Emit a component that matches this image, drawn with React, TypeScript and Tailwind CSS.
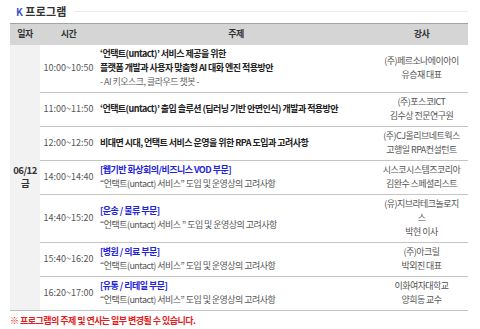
import React from 'react';

type Session = {
  time: string;
  title: React.ReactNode;
  speaker: React.ReactNode;
};

const sessions: Session[] = [
  {
    time: '10:00~10:50',
    title: (
      <>
        <p className="font-bold text-[#222]">‘언택트(untact)’ 서비스 제공을 위한</p>
        <p className="font-bold text-[#222]">플랫폼 개발과 사용자 맞춤형 AI 대화 엔진 적용방안</p>
        <p className="text-[#666]">- AI 키오스크, 클라우드 챗봇 -</p>
      </>
    ),
    speaker: (
      <>
        <p>(주)페르소나에이아이</p>
        <p>유승재 대표</p>
      </>
    ),
  },
  {
    time: '11:00~11:50',
    title: (
      <p className="font-bold text-[#222]">
        ‘언택트(untact)’ 출입 솔루션 (딥러닝 기반 안면인식) 개발과 적용방안
      </p>
    ),
    speaker: (
      <>
        <p>(주)포스코ICT</p>
        <p>김수상 전문연구원</p>
      </>
    ),
  },
  {
    time: '12:00~12:50',
    title: (
      <p className="font-bold text-[#222]">
        비대면 시대, 언택트 서비스 운영을 위한 RPA 도입과 고려사항
      </p>
    ),
    speaker: (
      <>
        <p>(주)CJ올리브네트웍스</p>
        <p>고행일 RPA컨설턴트</p>
      </>
    ),
  },
  {
    time: '14:00~14:40',
    title: (
      <>
        <p className="font-bold text-[#2323d6]">[웹기반 화상회의/비즈니스 VOD 부문]</p>
        <p className="text-[#555]">“언택트(untact) 서비스” 도입 및 운영상의 고려사항</p>
      </>
    ),
    speaker: (
      <>
        <p>시스코시스템즈코리아</p>
        <p>김완수 스페셜리스트</p>
      </>
    ),
  },
  {
    time: '14:40~15:20',
    title: (
      <>
        <p className="font-bold text-[#2323d6]">[운송 / 물류 부문]</p>
        <p className="text-[#555]">“언택트(untact) 서비스 ” 도입 및 운영상의 고려사항</p>
      </>
    ),
    speaker: (
      <>
        <p>(유)지브라테크놀로지</p>
        <p>스</p>
        <p>박현 이사</p>
      </>
    ),
  },
  {
    time: '15:40~16:20',
    title: (
      <>
        <p className="font-bold text-[#2323d6]">[병원 / 의료 부문]</p>
        <p className="text-[#555]">“언택트(untact) 서비스” 도입 및 운영상의 고려사항</p>
      </>
    ),
    speaker: (
      <>
        <p>(주)아크릴</p>
        <p>박외진 대표</p>
      </>
    ),
  },
  {
    time: '16:20~17:00',
    title: (
      <>
        <p className="font-bold text-[#2323d6]">[유통 / 리테일 부문]</p>
        <p className="text-[#555]">“언택트(untact) 서비스” 도입 및 운영상의 고려사항</p>
      </>
    ),
    speaker: (
      <>
        <p>이화여자대학교</p>
        <p>양희동 교수</p>
      </>
    ),
  },
];

export default function App() {
  return (
    <div
      className="w-[480px] h-[329px] bg-white px-[10px] pt-[3px] overflow-hidden text-[9px] leading-[14px] tracking-[-0.06em]"
      style={{ fontFamily: '"Noto Sans CJK KR", "Noto Sans", sans-serif' }}
    >
      <div className="flex items-center h-[17px] pl-[6px] w-[458px]">
        <span className="text-[#3a56c4] font-bold text-[10px] leading-none mr-[3px]">K</span>
        <h2 className="text-[11px] font-bold text-[#333] tracking-[0.02em] leading-none">프로그램</h2>
        <div className="flex-1 ml-[7px] h-px bg-[#ececec]" />
      </div>

      <table className="w-[458px] mt-[3px] border-collapse table-fixed">
        <colgroup>
          <col className="w-[30px]" />
          <col className="w-[57px]" />
          <col className="w-[278px]" />
          <col className="w-[93px]" />
        </colgroup>
        <thead>
          <tr className="h-[21px] bg-[#d5d5d5] border-t border-[#a3a3a3] text-[#333] font-bold">
            <th className="font-bold">일자</th>
            <th className="font-bold">시간</th>
            <th className="font-bold">주제</th>
            <th className="font-bold">강사</th>
          </tr>
        </thead>
        <tbody>
          {sessions.map((s, i) => (
            <tr key={s.time}>
              {i === 0 && (
                <td
                  rowSpan={sessions.length}
                  className="bg-[#f2f2f2] text-center align-middle font-bold text-[#333] leading-[13px] text-[9.5px] border-b border-[#bdbdbd]"
                >
                  <p>06/12</p>
                  <p>금</p>
                </td>
              )}
              <td className="text-center text-[#555] tracking-normal border-b border-[#c4c4c4] align-middle">
                {s.time}
              </td>
              <td className="pl-[3px] py-[2.5px] border-b border-[#c4c4c4] align-middle">{s.title}</td>
              <td className="text-center text-[#555] py-[2.5px] border-b border-[#c4c4c4] align-middle">
                {s.speaker}
              </td>
            </tr>
          ))}
        </tbody>
      </table>

      <p className="mt-[3px] text-[#e41b1b] font-bold">※ 프로그램의 주제 및 연사는 일부 변경될 수 있습니다.</p>
    </div>
  );
}
